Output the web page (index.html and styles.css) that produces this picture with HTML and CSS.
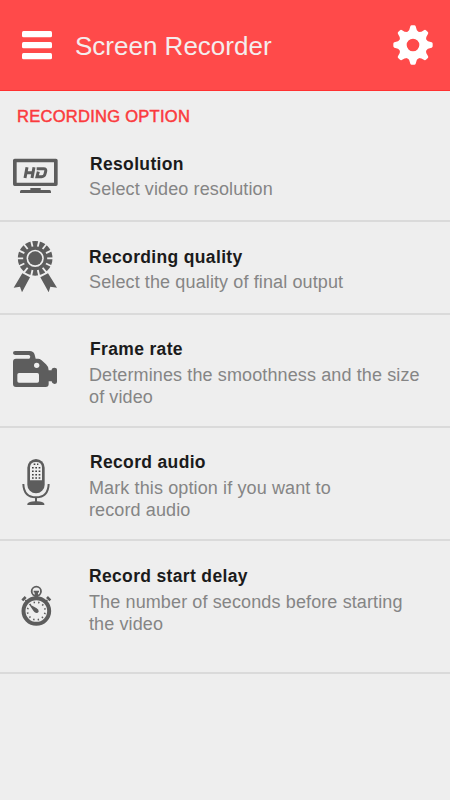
FILE: index.html
```html
<!DOCTYPE html>
<html lang="en">
<head>
<meta charset="utf-8">
<title>Screen Recorder</title>
<link rel="stylesheet" href="styles.css">
</head>
<body>
<header class="bar">
  <svg class="menu" viewBox="0 0 30 29"><rect width="30" height="6.2" rx="1.5"/><rect y="11" width="30" height="6.2" rx="1.5"/><rect y="22.1" width="30" height="6.2" rx="1.5"/></svg>
  <h1 class="bar-title">Screen Recorder</h1>
  <svg class="gear" viewBox="-60 -60 120 120">
    <defs><path id="tooth" d="M-17-38Q-10-43-8-56Q-7-59-4-59H4Q7-59 8-56Q10-43 17-38V-25H-17Z"/></defs>
    <path fill-rule="evenodd" d="M0-43A43 43 0 1 1 0 43A43 43 0 1 1 0-43ZM0-19A19 19 0 1 0 0 19A19 19 0 1 0 0-19Z"/>
    <use href="#tooth"/><use href="#tooth" transform="rotate(45)"/><use href="#tooth" transform="rotate(90)"/><use href="#tooth" transform="rotate(135)"/><use href="#tooth" transform="rotate(180)"/><use href="#tooth" transform="rotate(225)"/><use href="#tooth" transform="rotate(270)"/><use href="#tooth" transform="rotate(315)"/>
  </svg>
</header>
<main>
  <h2 class="section">RECORDING OPTION</h2>
  <section class="row resolution">
    <svg class="icon" viewBox="0 0 240 240">
      <path fill-rule="evenodd" d="M44 56H168Q173 56 173 61V133Q173 138 168 138H44Q39 138 39 133V61Q39 56 44 56ZM50 67V128H162V67Z"/>
      <path d="M91 144H122V150H149Q153 150 153 155V159H60V155Q60 150 64 150H91Z"/>
      <path class="line" stroke-width="9" d="M81 82L75 114M102 82L96 114M78 98H98M110 86H131Q139 86 137 94L135 102Q133 110 125 110H111L115 95"/>
    </svg>
    <div class="copy"><h3 class="name">Resolution</h3><p class="desc">Select video resolution</p></div>
  </section>
  <section class="row quality">
    <svg class="icon" viewBox="0 0 240 240">
      <circle cx="105.500" cy="85" r="39" class="line" stroke-width="26"/>
      <circle cx="105.500" cy="85" r="21"/>
      <g class="cuts"><path id="cut" d="M105.500 30V49" transform="rotate(12.860 105.500 85)"/><use href="#cut" transform="rotate(25.710 105.500 85)"/><use href="#cut" transform="rotate(51.430 105.500 85)"/><use href="#cut" transform="rotate(77.140 105.500 85)"/><use href="#cut" transform="rotate(102.860 105.500 85)"/><use href="#cut" transform="rotate(128.570 105.500 85)"/><use href="#cut" transform="rotate(154.290 105.500 85)"/><use href="#cut" transform="rotate(180 105.500 85)"/><use href="#cut" transform="rotate(205.710 105.500 85)"/><use href="#cut" transform="rotate(231.430 105.500 85)"/><use href="#cut" transform="rotate(257.140 105.500 85)"/><use href="#cut" transform="rotate(282.860 105.500 85)"/><use href="#cut" transform="rotate(308.570 105.500 85)"/><use href="#cut" transform="rotate(334.290 105.500 85)"/></g>
      <path d="M67 130L90 142L66 187L60 170L41 173ZM144 130L121 142L146 187L151 170L171 173Z"/>
    </svg>
    <div class="copy"><h3 class="name">Recording quality</h3><p class="desc">Select the quality of final output</p></div>
  </section>
  <section class="row frames">
    <svg class="icon" viewBox="0 0 240 240">
      <path d="M45 63H89Q101 63 104 74L107 86H114Q119 86 124 90L138 103Q146 110 146 121H155V118Q156 113 163 113Q171 113 171 120V156Q171 162 163 162Q156 162 155 154H146V162Q146 171 137 171H48Q39 171 39 162V95Q39 86 48 86H88Q94 79 87 75H45Q39 74 39 69Q39 63 45 63Z"/>
      <circle class="hole" cx="110" cy="106" r="8"/><rect class="hole" x="52" y="129" width="65" height="29" rx="5"/>
    </svg>
    <div class="copy"><h3 class="name">Frame rate</h3><p class="desc">Determines the smoothness and the size<br>of video</p></div>
  </section>
  <section class="row audio">
    <svg class="icon" viewBox="0 0 240 240">
      <rect x="82" y="42" width="52" height="103" rx="26"/>
      <path class="hole" d="M90 106V67Q91 51 108 51Q125 51 126 67V106Z"/>
      <path class="dots" d="M101 58H115M96 68H121M96 78.500H121M96 89H121M96 99H121"/>
      <path class="line" stroke-width="6" d="M70 117C71 145 86 157 108 157S145 145 146 117"/>
      <path d="M105 157H111V169Q130 170 133 176V180H82V176Q86 170 105 169Z"/>
    </svg>
    <div class="copy"><h3 class="name">Record audio</h3><p class="desc">Mark this option if you want to<br>record audio</p></div>
  </section>
  <section class="row delay">
    <svg class="icon" viewBox="0 0 240 240">
      <circle class="line" cx="109" cy="123" r="38.500" stroke-width="12"/>
      <circle class="line" cx="109" cy="64" r="14" stroke-width="5.500"/>
      <path d="M104 64H114V81H104Z"/>
      <path class="line" stroke-width="5" d="M101 65H117M76 90L84 98M142 90L134 98"/>
      <path class="line" stroke-width="8" d="M67 91L77 81M151 91L141 81"/>
      <circle class="line ticks" cx="109" cy="123" r="26.500" pathLength="120"/>
      <path d="M86 101L110 115Q117 119 116 125Q112 132 104 127L100 122Z"/>
    </svg>
    <div class="copy"><h3 class="name">Record start delay</h3><p class="desc">The number of seconds before starting<br>the video</p></div>
  </section>
</main>
</body>
</html>
```
FILE: styles.css
```css
* { box-sizing: border-box; }
body {
  margin: 0;
  min-height: 800px;
  background: #eee;
  font-family: "Liberation Sans", Arial, sans-serif;
}
h1, h2, h3, p { margin: 0; font-weight: 400; white-space: nowrap; }
.bar {
  display: flex;
  align-items: center;
  height: 91px;
  padding: 0 17px 0 22px;
  background: #ff4a4a;
  border-bottom: 1px solid #ff3030;
  fill: #fff;
}
.menu { width: 30px; height: 29px; }
.bar-title { margin-left: 23px; padding-top: 2px; font-size: 26px; color: #f4eded; }
.gear { width: 40px; height: 40px; margin-left: auto; }
.section {
  height: 38px;
  padding: 14px 0 0 17px;
  font-size: 16.5px;
  line-height: 22px;
  letter-spacing: .28px;
  color: #fb3a3d;
  -webkit-text-stroke: .5px #fb3a3d;
}
.row {
  display: flex;
  align-items: flex-start;
  height: 113px;
  border-bottom: 2px solid #dadada;
}
.icon { flex: none; width: 80px; height: 80px; fill: #5d5d5d; }
.copy { padding: 23px 0 0 9px; }
.name {
  padding-left: 1px;
  font-size: 17.5px;
  font-weight: 700;
  line-height: 22px;
  letter-spacing: .34px;
  color: #1b1b1b;
}
.desc {
  margin-top: 4px;
  font-size: 18px;
  line-height: 22px;
  letter-spacing: .12px;
  color: #858585;
}
.resolution, .quality { height: 93px; }
.delay { height: 133px; }
.resolution .copy, .quality .copy, .delay .copy { padding-top: 24px; }
.resolution .desc, .quality .desc { margin-top: 3px; }
.quality .name, .delay .name { padding-left: 0; }
.resolution .icon { margin-top: 11px; }
.quality .icon { margin-top: 8px; }
.frames .icon { margin-top: 15px; }
.audio .icon { margin-top: 17px; }
.delay .icon { margin-top: 29px; }
.line { fill: none; stroke: #5d5d5d; }
.hole { fill: #eee; }
.cuts { stroke: #eee; stroke-width: 5.5; }
.dots { stroke: #3f3f3f; stroke-width: 4.5; stroke-dasharray: 5 5; }
.ticks { stroke-width: 5; stroke-dasharray: 3 7; stroke-dashoffset: 6; }
```
